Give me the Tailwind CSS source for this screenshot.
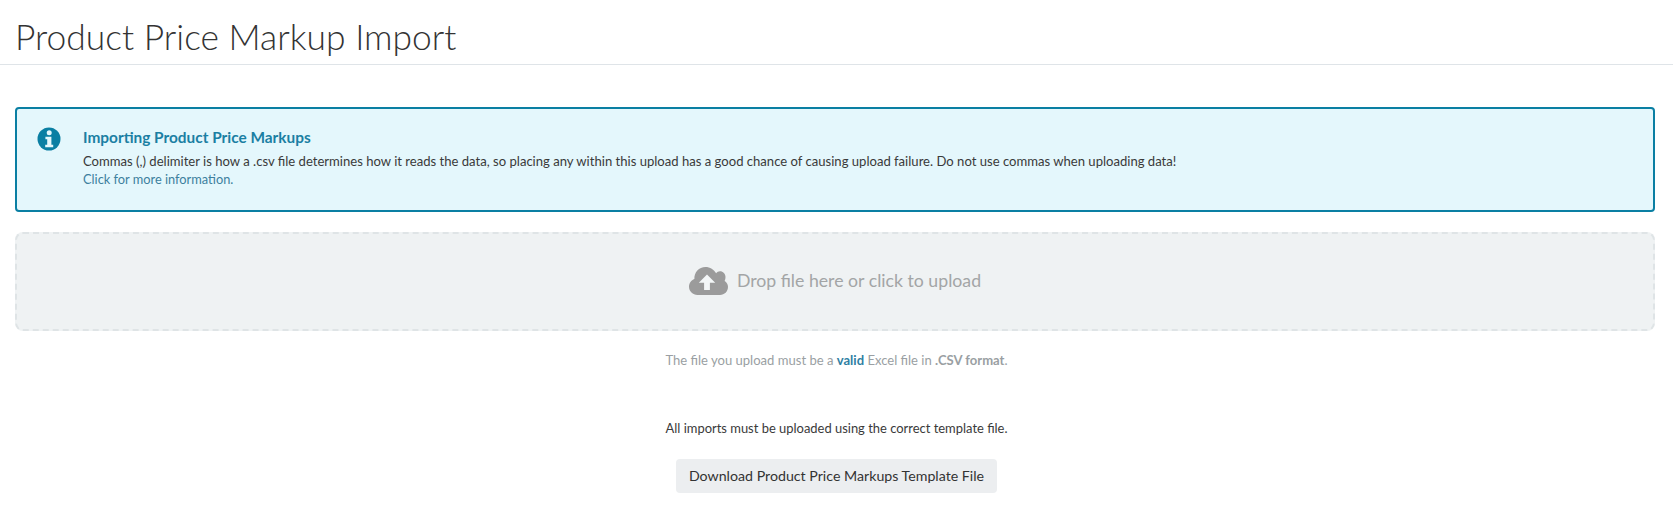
<!DOCTYPE html>
<html lang="en">
<head>
  <meta charset="UTF-8">
  <title>Product Price Markup Import</title>
  <script src="https://cdn.jsdelivr.net/npm/@tailwindcss/browser@4"></script>
</head>
<body class="bg-white text-[#333] font-['Lato','Open_Sans',sans-serif] overflow-hidden">
  <header class="h-[65px] border-b border-[#dfe4e8] px-[15px] pt-[13px]">
    <h1 class="text-[35.4px] leading-[48px] font-light text-[#333]">Product Price Markup Import</h1>
  </header>
  <main class="px-[15px] pt-[42px]">
    <div class="h-[105px] mr-[3px] rounded-[4px] border-2 border-[#0a7fa3] bg-[#e4f7fc] flex pl-[20px] pt-[17px]">
      <svg class="w-[24px] h-[24px] mt-[1px] shrink-0" viewBox="0 0 24 24">
        <circle cx="12" cy="12" r="11.5" fill="#0a7fa3"/>
        <circle cx="12.2" cy="5.7" r="2.5" fill="#e4f7fc"/>
        <path d="M8.400 9.700h6v8h1.800v2.600H8.200v-2.600h2v-5.400H8.400z" fill="#e4f7fc"/>
      </svg>
      <div class="ml-[22px]">
        <h2 class="text-[15.4px] leading-[22px] font-bold text-[#1b7fa3]">Importing Product Price Markups</h2>
        <p class="text-[13.09px] leading-[18px] mt-[4px] text-[#3a3a3a]">Commas (,) delimiter is how a .csv file determines how it reads the data, so placing any within this upload has a good chance of causing upload failure. Do not use commas when uploading data!</p>
        <a href="#" class="block text-[12.8px] leading-[18px] text-[#3d7f9e]">Click for more information.</a>
      </div>
    </div>
    <div class="mt-[20px] h-[99px] mr-[3px] rounded-[8px] border-2 border-dashed border-[#dfe4e6] bg-[#eff2f3] flex items-center justify-center gap-[9px] pb-[1px]">
      <svg class="w-[39px] h-[28px]" viewBox="0 0 39 28">
        <path d="M8.500 28C3.800 28 0 24.400 0 19.800c0-3.500 2.200-6.500 5.400-7.700C5 5.400 10 0 16.500 0c4.500 0 8.500 2.500 10.600 6.300 .9-1.300 2.300-2 3.900-2 3 0 5.500 2.500 5.500 5.700 0 1.500-.3 2.900-.9 4.100 2 1.300 3.400 3.300 3.400 5.700 0 4.800-3.500 8.200-8 8.200z" fill="#9b9b9b"/>
        <path d="M18 7.500l8.200 8.200h-5.300v7.200h-5.800v-7.200H9.800z" fill="#f4f7f8"/>
      </svg>
      <span class="text-[17.7px] text-[#a3a5a6]">Drop file here or click to upload</span>
    </div>
    <p class="mt-[20px] text-center text-[13.05px] leading-[18px] text-[#9a9fa3]">The file you upload must be a <span class="font-bold text-[#2f7fa3]">valid</span> Excel file in <span class="font-bold">.CSV format</span>.</p>
    <p class="mt-[50px] text-center text-[12.95px] leading-[18px] text-[#3a3a3a]">All imports must be uploaded using the correct template file.</p>
    <div class="mt-[22px] flex justify-center">
      <button class="w-[321px] h-[34px] rounded-[4px] bg-[#eceef0] text-[14.2px] text-[#333]">Download Product Price Markups Template File</button>
    </div>
  </main>
</body>
</html>
